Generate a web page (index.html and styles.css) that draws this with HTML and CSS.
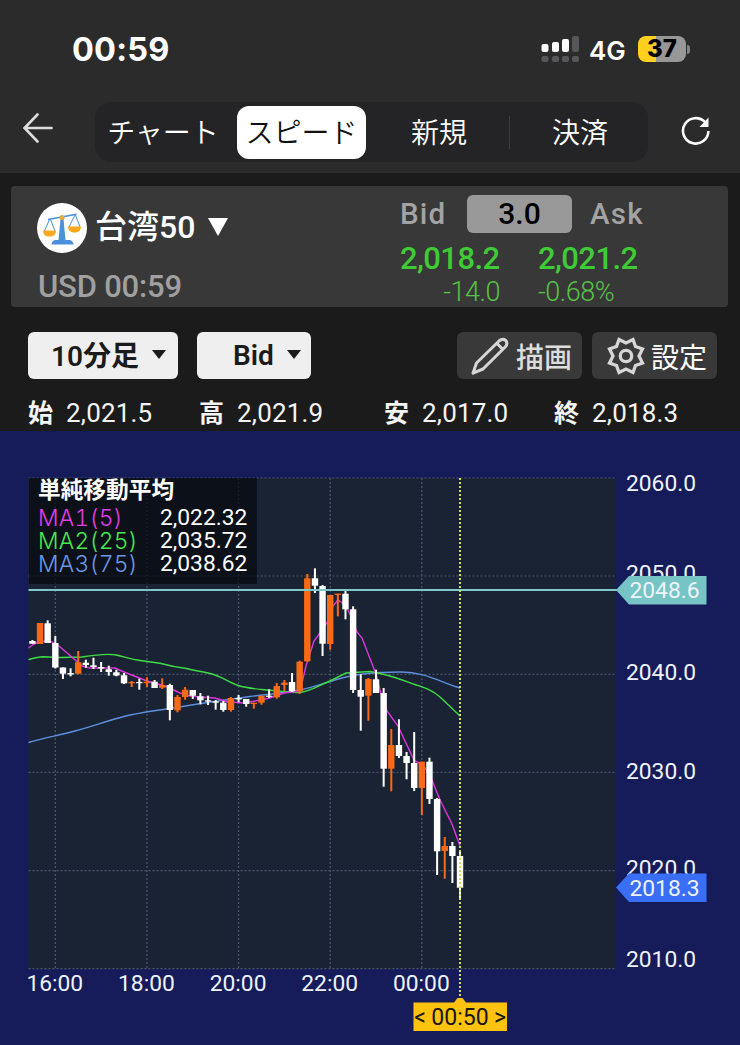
FILE: index.html
```html
<!doctype html>
<html lang="ja">
	<head>
		<meta charset="UTF-8" />
		<meta name="viewport" content="width=device-width, initial-scale=1.0" />
		<title>台湾50 スピード注文</title>
		<link rel="stylesheet" href="styles.css">
	</head>
	<body>
		<header>
			<div class="status-bar">
				<span class="clock">00:59</span>
				<svg class="signal" width="38" height="28" viewBox="0 0 38 28">
					<g fill="#fff">
						<rect x="0.5" y="9" width="7" height="8" rx="2" />
						<rect x="11" y="7" width="7" height="10" rx="2" />
						<rect x="21" y="4" width="7" height="13" rx="2" />
					</g>
					<g fill="#57575a">
						<rect x="31" y="1" width="7" height="16" rx="2" />
						<rect x="0.5" y="21" width="7" height="6" rx="2" />
						<rect x="11" y="21" width="7" height="6" rx="2" />
						<rect x="21" y="21" width="7" height="6" rx="2" />
						<rect x="31" y="21" width="7" height="6" rx="2" />
					</g>
				</svg>
				<span class="network">4G</span>
				<span class="battery">37</span>
				<span class="battery-tip"></span>
			</div>
			<nav>
				<svg class="back" width="30" height="30" viewBox="0 0 30 30">
					<path d="M14.5 1.5 L1.5 15 L14.5 28.5 M1.5 15 H28.5" />
				</svg>
				<div class="tabs">
					<a class="tab">チャート</a>
					<a class="tab active">スピード</a>
					<a class="tab">新規</a>
					<a class="tab last">決済</a>
				</div>
				<svg class="reload" width="30" height="30" viewBox="0 0 30 30">
					<path d="M27.4 15 A12.7 12.7 0 1 1 24 6.2" />
					<path class="head" d="M27.5 1.5 V11 H18.5 Z" />
				</svg>
			</nav>
		</header>

		<section class="quote">
			<div class="symbol">
				<div class="symbol-name">
					<svg class="scales" width="50" height="50" viewBox="0 0 50 50">
						<circle cx="25" cy="25" r="25" fill="#fff" />
						<g fill="none" stroke="#4a90dc" stroke-width="1">
							<path d="M11 16.5 L39.5 11.3" stroke-width="1.6" />
							<path d="M12.5 16.5 L7.5 28 M13.5 16.5 L18 28 M38 12 L32 24 M38.5 12 L43 24" />
						</g>
						<path d="M23.5 16 H26.5 L28.5 37 H33 Q36.5 38 36.5 41.5 H14.5 Q14.5 38 18 37 H21.5 Z" fill="#4a90dc" />
						<path d="M6 27.5 H19 C19 32 16 33.5 12.5 33.5 S6 32 6 27.5 Z M31 23.5 H44 C44 28 41 29.5 37.5 29.5 S31 28 31 23.5 Z" fill="#fba91c" />
						<circle cx="25" cy="14.5" r="2.5" fill="#e3aa3c" />
					</svg>
					<span class="name">台湾50</span>
					<span class="caret-big"></span>
				</div>
				<div class="currency">USD 00:59</div>
			</div>
			<div class="rates">
				<div class="rates-head">
					<span class="bid">Bid</span>
					<span class="spread">3.0</span>
					<span>Ask</span>
				</div>
				<div class="prices">
					<span>2,018.2</span>
					<span>2,021.2</span>
				</div>
				<div class="changes">
					<span class="diff">-14.0</span>
					<span class="percent">-0.68%</span>
				</div>
			</div>
		</section>

		<div class="toolbar">
			<button class="select period"><span>10分足</span><i class="caret"></i></button>
			<button class="select side">Bid<i class="caret"></i></button>
			<button class="tool draw">
				<svg width="38" height="38" viewBox="0 0 38 38">
					<path d="M2 36.2 L5.5 26 L28 4 Q31.500 1 34.800 3.500 Q37.200 6.800 34.200 10 L12 32 Z M26 6.500 L31.800 12.300" />
				</svg>
				描画
			</button>
			<button class="tool">
				<svg width="38" height="38" viewBox="0 0 38 38">
					<path d="M12 2.500 L19 6 L26 2.500 L28.500 9.500 L35.500 12 L32 19 L35.500 26 L28.500 28.500 L26 35.500 L19 32 L12 35.500 L9.500 28.500 L2.500 26 L6 19 L2.500 12 L9.500 9.500 Z" />
					<circle cx="19" cy="19" r="5.700" />
				</svg>
				設定
			</button>
		</div>

		<div class="ohlc">
			<span><b>始</b>2,021.5</span>
			<span><b>高</b>2,021.9</span>
			<span><b>安</b>2,017.0</span>
			<span><b>終</b>2,018.3</span>
		</div>

		<div class="chart">
			<svg width="740" height="614" viewBox="0 431 740 614">
				<rect class="plot" x="28.500" y="478" width="587.500" height="491" />
				<g id="grid" class="grid"></g>
				<path class="ma ma3" d="M28.500 742.500 C45 738 60 735 75 731 S110 720 124 716.500 S147 712 169 708.500 S230 699 250 696.500 S285 693 300 690 S330 681 346 677 S376 672.500 400 672 S440 682 460 688" />
				<path class="ma ma2" d="M28.500 659.700 C34 658 38 656.700 43 656.700 L60 657.500 L82 657 C94 655 105 653.500 115 654.700 C125 657 132 659.500 140 660.500 L160 663.300 C170 666 178 667.500 185 668.300 C196 671 206 672 215 675 C224 678 230 683 238 685.500 S252 688.500 262 689.500 S290 692.500 299 692.500 S322 684 330 681 L346 673 L370 671.500 C388 674 405 681 415 684.500 S432 690 440 697 L460 716" />
				<polyline class="ma ma1" points="28.500,648 34,644 41,641 52,642 59,646 70,655.500 82,666 90,668 115,668 124,672 147,681 165,686 180,693 190,696 200,697 215,698 228,702 245,703 260,700 270,698 284,693 300,691 306,666 314,641 320,633 328,621 333,606 338,600 345,605 350,614 357,632 362,638 369,656 376,674 380,690 387,711 398,726 405,741 414,760 424,766 432,780 440,800 452,824 460,846" />
				<g id="candles"></g>
				<line class="level" x1="28.500" y1="590" x2="618" y2="590" />
				<line class="cursor" x1="460" y1="478" x2="460" y2="998" />
				<g id="labels" class="labels"></g>
				<path fill="#76c4c4" d="M616 590 L629 576 H706.500 V604.500 H629 Z" />
				<path fill="#3a6ff5" d="M616 887.500 L629 873.500 H706.500 V902 H629 Z" />
				<g class="labels">
					<text x="629.500" y="598.300">2048.6</text>
					<text x="629.500" y="896">2018.3</text>
				</g>
				<path class="time-tag" d="M413.500 1002.500 H454 L457.500 998 H462.500 L466 1002.500 H507 V1031 H413.500 Z" />
				<g class="time-text">
					<text x="460" y="1025">00:50</text>
					<text x="420" y="1025">&lt;</text>
					<text x="500" y="1025">&gt;</text>
				</g>
			</svg>
			<div class="legend">
				<b>単純移動平均</b>
				<span class="key pink">MA1(5)</span><span>2,022.32</span>
				<span class="key green">MA2(25)</span><span>2,035.72</span>
				<span class="key blue">MA3(75)</span><span>2,038.62</span>
			</div>
		</div>

		<script>
			const SVG = 'http://www.w3.org/2000/svg';
			const STEP = 7.636;
			const UP = '#f96a16';
			const DOWN = '#fff';

			// [up?, high, body top, body bottom, low]
			const candles = [
				[0, 640, 641, 643.7, 644], [1, 623, 623, 644, 644], [0, 620.3, 623.3, 643, 643],
				[0, 636, 643, 667.5, 668.5], [0, 667.5, 667.5, 673.7, 679], [0, 668.3, 673, 674.5, 676.3],
				[1, 651, 662.3, 673.7, 674.3], [0, 659.7, 662.7, 665, 667.7], [0, 657.7, 665.3, 667, 669],
				[0, 662, 667, 668.5, 672], [0, 665.7, 669.3, 672, 675.7], [0, 669.7, 672.3, 675.5, 676.3],
				[0, 673, 675.3, 683.3, 684], [1, 681, 682, 683.3, 687], [0, 678.7, 682, 683.2, 689.7],
				[1, 677.3, 681.7, 683.2, 687], [0, 680, 681.7, 688, 688], [1, 678.3, 685, 687.7, 689],
				[0, 683.7, 685, 710, 720.3], [1, 695, 697, 710.3, 712.3], [1, 687, 689.7, 697, 699.7],
				[0, 690, 690, 695.7, 699], [0, 693, 696.3, 700.3, 704.3], [0, 695.7, 700.3, 701.6, 705],
				[0, 700, 701.3, 702.7, 709.7], [0, 701, 702.7, 710, 711.7], [1, 697, 698, 710, 711.7],
				[0, 695, 698, 699.4, 702.3], [0, 699, 699, 704, 706.7], [1, 702.7, 702.7, 704, 708.7],
				[1, 695.3, 696, 702.7, 704.7], [0, 689.3, 695.7, 696.8, 698], [1, 683, 686, 697.3, 698.7],
				[1, 680, 682.7, 685, 691.3], [0, 673, 682, 691.3, 692], [1, 660.7, 661.7, 691.3, 694],
				[1, 574, 578.3, 661.3, 662], [0, 568.3, 578.3, 585.7, 593], [0, 585, 586, 643.7, 656],
				[1, 595, 595, 644, 649.7], [1, 593.7, 593.7, 595, 616.3], [0, 590.3, 593.7, 609.3, 619.3],
				[0, 606.3, 609.3, 690, 693], [0, 674.3, 690, 696.7, 730.7], [1, 678, 679, 695.7, 720.7],
				[0, 669.7, 679.3, 693, 693], [0, 688, 693, 768.7, 786.7], [1, 729, 745, 768.7, 791.3],
				[0, 719.3, 745, 756, 758], [0, 752, 756, 763, 779.3], [0, 732, 763, 788, 791],
				[1, 761.7, 761.7, 788, 815], [0, 757.7, 761.7, 799, 804], [0, 798, 799, 851.3, 875],
				[1, 837, 846, 851, 878.7], [0, 842, 846, 856, 883], [0, 850, 856, 887.7, 900]
			];

			function add(parent, name, attrs, text) {
				const el = document.createElementNS(SVG, name);
				for (const key in attrs) el.setAttribute(key, attrs[key]);
				if (text) el.textContent = text;
				document.getElementById(parent).appendChild(el);
			}

			candles.forEach(([up, high, top, bottom, low], i) => {
				const x = 32.4 + i * STEP;
				const fill = up ? UP : DOWN;
				add('candles', 'rect', { x: x - 1, y: high, width: 2, height: low - high, fill });
				add('candles', 'rect', { x: x - 3.2, y: top, width: 6.4, height: bottom - top, fill });
			});

			[['2060.0', 478, 491.3], ['2050.0', 576, 581.3], ['2040.0', 674.3, 680], ['2030.0', 772.3, 778.5], ['2020.0', 870.7, 876.3], ['2010.0', 968.7, 967]].forEach(([label, y, base]) => {
				add('grid', 'line', { x1: 28.5, y1: y, x2: 616, y2: y });
				add('labels', 'text', { x: 626, y: base }, label);
			});

			['16:00', '18:00', '20:00', '22:00', '00:00'].forEach((label, i) => {
				const x = 55.3 + i * STEP * 12;
				add('grid', 'line', { x1: x, y1: 478, x2: x, y2: 969 });
				add('labels', 'text', { x: x - 0.5, y: 990.7, 'text-anchor': 'middle' }, label);
			});
		</script>
	</body>
</html>
```
FILE: styles.css
```css
* {
	box-sizing: border-box;
}
body {
	margin: 0;
	width: 740px;
	height: 1045px;
	overflow: hidden;
	background: #1b1b1b;
	color: #fff;
	font-family: Roboto, "Noto Sans CJK JP", sans-serif;
}
svg {
	display: block;
	flex: none;
}
header {
	height: 173px;
	background: #2b2b2b;
}
.status-bar {
	display: flex;
	align-items: center;
	height: 102px;
	padding: 0 50px 4px 72px;
	font-family: Inter, sans-serif;
}
.clock {
	flex: 1;
	margin-top: 1px;
	font-size: 32.5px;
	font-weight: 700;
	letter-spacing: 0.2px;
}
.network {
	width: 38px;
	margin: 2px 11px 0 10px;
	font-size: 26px;
	font-weight: 600;
	white-space: nowrap;
}
.battery {
	width: 48px;
	height: 26px;
	border-radius: 8px;
	background: linear-gradient(90deg, #fdd01e 18px, #979797 18px);
	color: #000;
	font-size: 24px;
	font-weight: 800;
	line-height: 26px;
	text-align: center;
}
.battery-tip {
	width: 3px;
	height: 9px;
	margin-left: 1px;
	border-radius: 0 4px 4px 0;
	background: #848484;
}
nav {
	display: flex;
	align-items: center;
	height: 60px;
	padding-left: 23px;
}
.back {
	margin: -8px 42px 0 0;
	fill: none;
	stroke: #ddd;
	stroke-width: 2.6;
	stroke-linecap: round;
}
.tabs {
	display: flex;
	align-items: center;
	width: 553px;
	height: 60px;
	border-radius: 16px;
	background: #242426;
}
.tab {
	position: relative;
	width: 143px;
	padding-left: 3px;
	color: #fff;
	font-family: "Noto Sans CJK JP", sans-serif;
	font-size: 28px;
	font-weight: 350;
	line-height: 51px;
	height: 53px;
	text-align: center;
}
.tab:first-child {
	width: 142px;
	padding: 0 6px 0 0;
}
.tab.active {
	width: 129px;
	padding-left: 0;
	border-radius: 12px;
	background: #fff;
	color: #111;
}
.tab.last {
	width: 139px;
}
.tab.last::before {
	content: "";
	position: absolute;
	left: 0;
	top: 10px;
	width: 1px;
	height: 33px;
	background: #3e3e40;
}
.reload {
	margin: -3px 0 0 33px;
	fill: none;
	stroke: #fff;
	stroke-width: 2.6;
}
.reload .head {
	fill: #fff;
	stroke: none;
}
.quote {
	display: flex;
	height: 121px;
	margin: 13px 12px 0 11px;
	border-radius: 4px;
	background: #383838;
}
.symbol {
	width: 389px;
	padding: 17px 0 0 26px;
}
.symbol-name {
	display: flex;
	align-items: center;
	height: 50px;
}
.name {
	margin: -2px 0 0 8px;
	font-size: 32px;
	font-weight: 500;
	line-height: 50px;
}
.caret-big {
	margin: -3px 0 0 13px;
	border: 10px solid transparent;
	border-width: 18px 10px 0;
	border-top-color: #fff;
}
.currency {
	margin-top: 14px;
	padding-left: 1px;
	color: #a0a0a0;
	font-size: 31px;
	line-height: 40px;
	font-weight: 500;
	letter-spacing: -0.2px;
}
.rates {
	padding-top: 9px;
}
.rates-head {
	display: flex;
	height: 38px;
	color: #a3a3a3;
	font-size: 29.5px;
	font-weight: 500;
	line-height: 38px;
	letter-spacing: 1.2px;
}
.bid {
	width: 67px;
}
.spread {
	width: 105px;
	margin-right: 18px;
	border-radius: 6px;
	background: #999;
	color: #000;
	font-size: 30px;
	letter-spacing: 0;
	text-align: center;
}
.prices,
.changes {
	display: grid;
	grid-template-columns: 100px 110px;
	column-gap: 38px;
}
.prices {
	margin-top: 7px;
	color: #3fcb35;
	font-size: 31px;
	font-weight: 500;
	line-height: 38px;
	letter-spacing: -0.6px;
}
.changes {
	color: #56c245;
	font-size: 27px;
	font-weight: 300;
	line-height: 28px;
	letter-spacing: -0.5px;
}
.diff {
	text-align: right;
}
.toolbar {
	display: flex;
	height: 47px;
	margin: 25px 0 0 28px;
}
button {
	display: flex;
	align-items: center;
	height: 47px;
	padding: 0;
	border: none;
	border-radius: 6px;
	font-family: inherit;
}
.select {
	background: #efefef;
	color: #1b1b1b;
	font-size: 28px;
	font-weight: 600;
}
.period {
	width: 150px;
	margin-right: 19px;
	padding-left: 23px;
}
.period span {
	margin-top: -3px;
}
.side {
	width: 114px;
	margin-right: 146px;
	padding-left: 36px;
}
.caret {
	margin: -2px 0 0 13px;
	border: 7.5px solid transparent;
	border-width: 9px 7.5px 0;
	border-top-color: #1b1b1b;
}
.tool {
	width: 125px;
	gap: 6px;
	padding-left: 15px;
	background: #393939;
	color: #fff;
	font-size: 28px;
	font-weight: 400;
}
.tool svg {
	fill: none;
	stroke: #d6d6d6;
	stroke-width: 3.3;
}
.draw {
	margin-right: 10px;
	padding-left: 14px;
	color: #ddd;
	font-weight: 500;
}
.draw svg {
	margin-right: 1px;
	stroke-width: 3;
	stroke-linejoin: round;
}
.ohlc {
	display: grid;
	grid-template-columns: 171px 185px 170px 170px;
	height: 52px;
	padding: 15px 0 0 28px;
	font-size: 26px;
	line-height: 38px;
	color: #f4f4f4;
	letter-spacing: 0.2px;
}
.ohlc b {
	display: inline-block;
	width: 38px;
	font-size: 25px;
	font-weight: 700;
}
.chart {
	position: relative;
	height: 614px;
	background: #161c59;
}
.plot {
	fill: #1a2333;
}
.grid line {
	stroke: #4b566c;
	stroke-width: 1.2;
	stroke-dasharray: 2 2;
}
.ma {
	fill: none;
	stroke-width: 1.4;
}
.ma1 {
	stroke: #df35df;
}
.ma2 {
	stroke: #3edc46;
}
.ma3 {
	stroke: #5f8fe0;
}
.level {
	stroke: #7cc8c8;
	stroke-width: 2;
}
.cursor {
	stroke: #d6e04e;
	stroke-width: 2;
	stroke-dasharray: 2 2;
}
.labels {
	fill: #eef3fb;
	font-size: 22.8px;
}
.time-tag {
	fill: #ffc20e;
}
.time-text {
	fill: #151515;
	font-size: 23px;
	text-anchor: middle;
}
.legend {
	position: absolute;
	left: 29px;
	top: 47px;
	display: grid;
	grid-template-columns: 122px 88px;
	grid-template-rows: 28px repeat(3, 23px);
	width: 228px;
	height: 106px;
	padding-left: 9px;
	background: rgba(8, 11, 18, 0.75);
	font-size: 22.8px;
	line-height: 23px;
	white-space: nowrap;
}
.legend b {
	grid-column: 1 / 3;
	padding-top: 1px;
	font-size: 22.7px;
	font-weight: 700;
}
.key {
	font-family: Inter, sans-serif;
	font-weight: 300;
	font-variant-numeric: tabular-nums;
	letter-spacing: 0.3px;
}
.pink {
	color: #e43de4;
}
.green {
	color: #45ea4d;
}
.blue {
	color: #6a98e6;
}
```
